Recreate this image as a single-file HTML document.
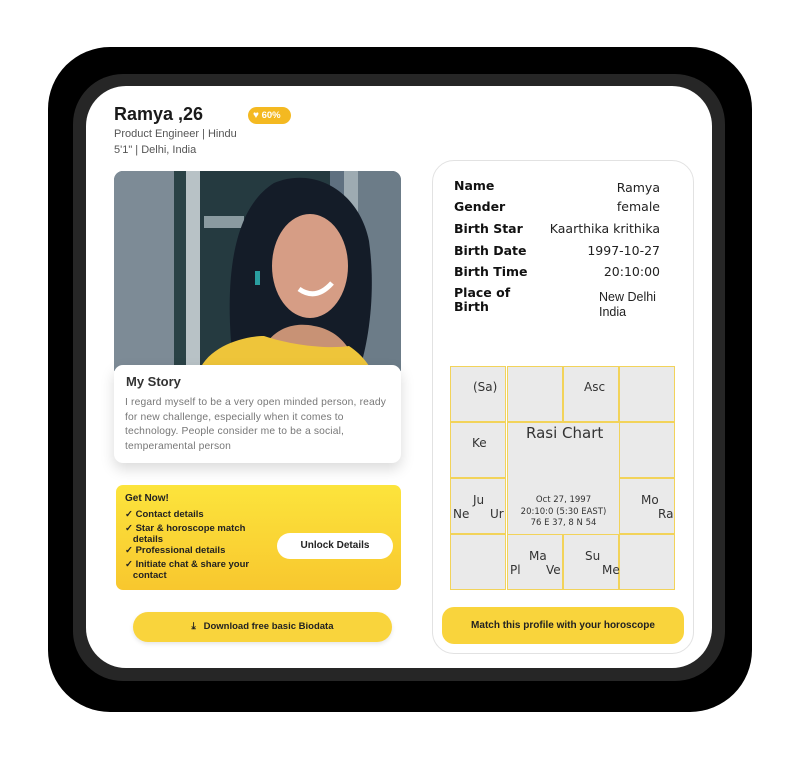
<!DOCTYPE html>
<html><head><meta charset="utf-8"><style>
*{margin:0;padding:0;box-sizing:border-box}
body{width:799px;height:757px;background:#fff;position:relative;overflow:hidden;font-family:"Liberation Sans",sans-serif}
.a{position:absolute}
.outer{left:48px;top:47px;width:704px;height:665px;background:#000;border-radius:62px}
.mid{left:73px;top:74px;width:652px;height:607px;background:#262626;border-radius:50px}
.card{left:86px;top:86px;width:626px;height:582px;background:#fff;border-radius:40px}
.lbl{font-family:"DejaVu Sans",sans-serif;font-weight:bold;font-size:12.5px;color:#111}
.val{font-family:"DejaVu Sans",sans-serif;font-size:12.5px;color:#222;text-align:right;right:0}
.cell{position:absolute;width:56px;height:56px;border:1px solid #f2d35a;background:#eaeaea}
.pl{position:absolute;font-family:"DejaVu Sans",sans-serif;font-size:12px;color:#333}
.chk{font-size:9.5px;font-weight:bold;color:#222;line-height:10.5px}
</style></head><body>
<div class="a outer"></div>
<div class="a mid"></div>
<div class="a card"></div>

<div class="a" style="left:114px;top:104px;font-size:18px;font-weight:bold;color:#1a1a1a">Ramya ,26</div>
<div class="a" style="left:248px;top:107px;width:43px;height:17px;border-radius:9px;background:#f4b921;color:#fff;font-size:9.5px;font-weight:bold;line-height:17px;padding-left:5px"><span style="font-size:10px">♥</span> 60%</div>
<div class="a" style="left:114px;top:128px;font-size:11px;color:#555">Product Engineer | Hindu</div>
<div class="a" style="left:114px;top:144px;font-size:11px;color:#555">5'1" | Delhi, India</div>

<svg class="a" style="left:114px;top:171px;border-radius:9px 9px 0 0" width="287" height="200" viewBox="0 0 287 200">
<rect width="287" height="200" fill="#5f7080"/>
<rect x="0" width="60" height="200" fill="#7d8b96"/>
<rect x="60" width="12" height="200" fill="#2a4246"/>
<rect x="72" width="14" height="200" fill="#b8c2c6"/>
<rect x="86" width="130" height="200" fill="#253a40"/>
<rect x="90" y="45" width="40" height="12" fill="#8a9aa0"/>
<rect x="230" width="14" height="200" fill="#9eabb2"/>
<rect x="244" width="43" height="200" fill="#6c7c88"/>
<path d="M120 200 C110 120 115 40 160 12 C200 -5 245 20 255 70 C262 120 255 170 245 200 Z" fill="#141c28"/>
<ellipse cx="196" cy="95" rx="38" ry="52" fill="#d69d85"/>
<path d="M140 200 C150 160 175 150 200 155 C230 160 240 185 245 200 Z" fill="#c89275"/>
<path d="M85 200 C95 175 130 165 150 165 C180 175 215 178 235 175 C250 185 255 195 258 200 Z" fill="#eec53a"/>
<path d="M185 118 Q202 130 218 112" stroke="#fff" stroke-width="5" fill="none"/>
<rect x="141" y="100" width="5" height="14" fill="#2a9ea0"/>
</svg>

<div class="a" style="left:114px;top:365px;width:287px;height:98px;background:#fff;border-radius:9px;box-shadow:0 6px 14px rgba(0,0,0,.15)"></div>
<div class="a" style="left:126px;top:374px;font-size:13px;font-weight:bold;color:#333">My Story</div>
<div class="a" style="left:125px;top:396px;width:268px;font-size:10.3px;line-height:14.6px;color:#777;letter-spacing:0.15px">I regard myself to be a very open minded person, ready for new challenge, especially when it comes to technology. People consider me to be a social, temperamental person</div>

<div class="a" style="left:116px;top:485px;width:285px;height:105px;border-radius:7px;background:linear-gradient(#fce43c,#f8c72e)"></div>
<div class="a chk" style="left:125px;top:494px;font-size:10px">Get Now!</div>
<div class="a chk" style="left:125px;top:510px;width:140px">✓ Contact details</div>
<div class="a chk" style="left:125px;top:524px;width:140px">✓ Star &amp; horoscope match<br>&nbsp;&nbsp;&nbsp;details</div>
<div class="a chk" style="left:125px;top:546px;width:140px">✓ Professional details</div>
<div class="a chk" style="left:125px;top:560px;width:140px">✓ Initiate chat &amp; share your<br>&nbsp;&nbsp;&nbsp;contact</div>
<div class="a" style="left:277px;top:533px;width:116px;height:26px;border-radius:13px;background:#fff;text-align:center;line-height:26px;font-size:10px;font-weight:bold;color:#222">Unlock Details</div>

<div class="a" style="left:133px;top:612px;width:259px;height:30px;border-radius:15px;background:#f9d43c;box-shadow:0 2px 4px rgba(0,0,0,.1);text-align:center;line-height:30px;font-size:9.5px;font-weight:bold;color:#222">⤓&nbsp;&nbsp;&nbsp;Download free basic Biodata</div>

<div class="a" style="left:432px;top:160px;width:262px;height:494px;border:1px solid #e2e2e2;border-radius:22px"></div>
<div class="a" style="left:454px;top:178px;width:206px;height:150px">
<div class="a lbl" style="top:0">Name</div><div class="a val" style="top:2px">Ramya</div>
<div class="a lbl" style="top:21px">Gender</div><div class="a val" style="top:21px">female</div>
<div class="a lbl" style="top:43px">Birth Star</div><div class="a val" style="top:43px">Kaarthika krithika</div>
<div class="a lbl" style="top:65px">Birth Date</div><div class="a val" style="top:65px">1997-10-27</div>
<div class="a lbl" style="top:86px">Birth Time</div><div class="a val" style="top:86px">20:10:00</div>
<div class="a lbl" style="top:108px;line-height:14px">Place of<br>Birth</div><div class="a" style="left:145px;top:112px;font-size:12.5px;line-height:15px;color:#222">New Delhi<br>India</div>
</div>

<div class="a" style="left:450px;top:366px;width:226px;height:225px">
<div class="cell" style="left:0;top:0"></div><div class="cell" style="left:57px;top:0"></div><div class="cell" style="left:113px;top:0"></div><div class="cell" style="left:169px;top:0"></div>
<div class="cell" style="left:0;top:56px"></div><div class="cell" style="left:169px;top:56px"></div>
<div class="cell" style="left:0;top:112px"></div><div class="cell" style="left:169px;top:112px"></div>
<div class="cell" style="left:0;top:168px"></div><div class="cell" style="left:57px;top:168px"></div><div class="cell" style="left:113px;top:168px"></div><div class="cell" style="left:169px;top:168px"></div>
<div class="cell" style="left:57px;top:56px;width:113px;height:113px"></div>
<div class="pl" style="left:23px;top:14px">(Sa)</div>
<div class="pl" style="left:134px;top:14px">Asc</div>
<div class="pl" style="left:22px;top:70px">Ke</div>
<div class="pl" style="left:76px;top:58px;font-size:15px">Rasi Chart</div>
<div class="pl" style="left:23px;top:127px">Ju</div><div class="pl" style="left:3px;top:141px">Ne</div><div class="pl" style="left:40px;top:141px">Ur</div>
<div class="pl" style="left:57px;top:129px;width:113px;text-align:center;font-size:8.5px;line-height:11.5px">Oct 27, 1997<br>20:10:0 (5:30 EAST)<br>76 E 37, 8 N 54</div>
<div class="pl" style="left:191px;top:127px">Mo</div><div class="pl" style="left:208px;top:141px">Ra</div>
<div class="pl" style="left:79px;top:183px">Ma</div><div class="pl" style="left:60px;top:197px">Pl</div><div class="pl" style="left:96px;top:197px">Ve</div>
<div class="pl" style="left:135px;top:183px">Su</div><div class="pl" style="left:152px;top:197px">Me</div>
</div>

<div class="a" style="left:442px;top:607px;width:242px;height:37px;border-radius:12px;background:#f9d43c;text-align:center;line-height:37px;font-size:10px;font-weight:bold;color:#222">Match this profile with your horoscope</div>
</body></html>
